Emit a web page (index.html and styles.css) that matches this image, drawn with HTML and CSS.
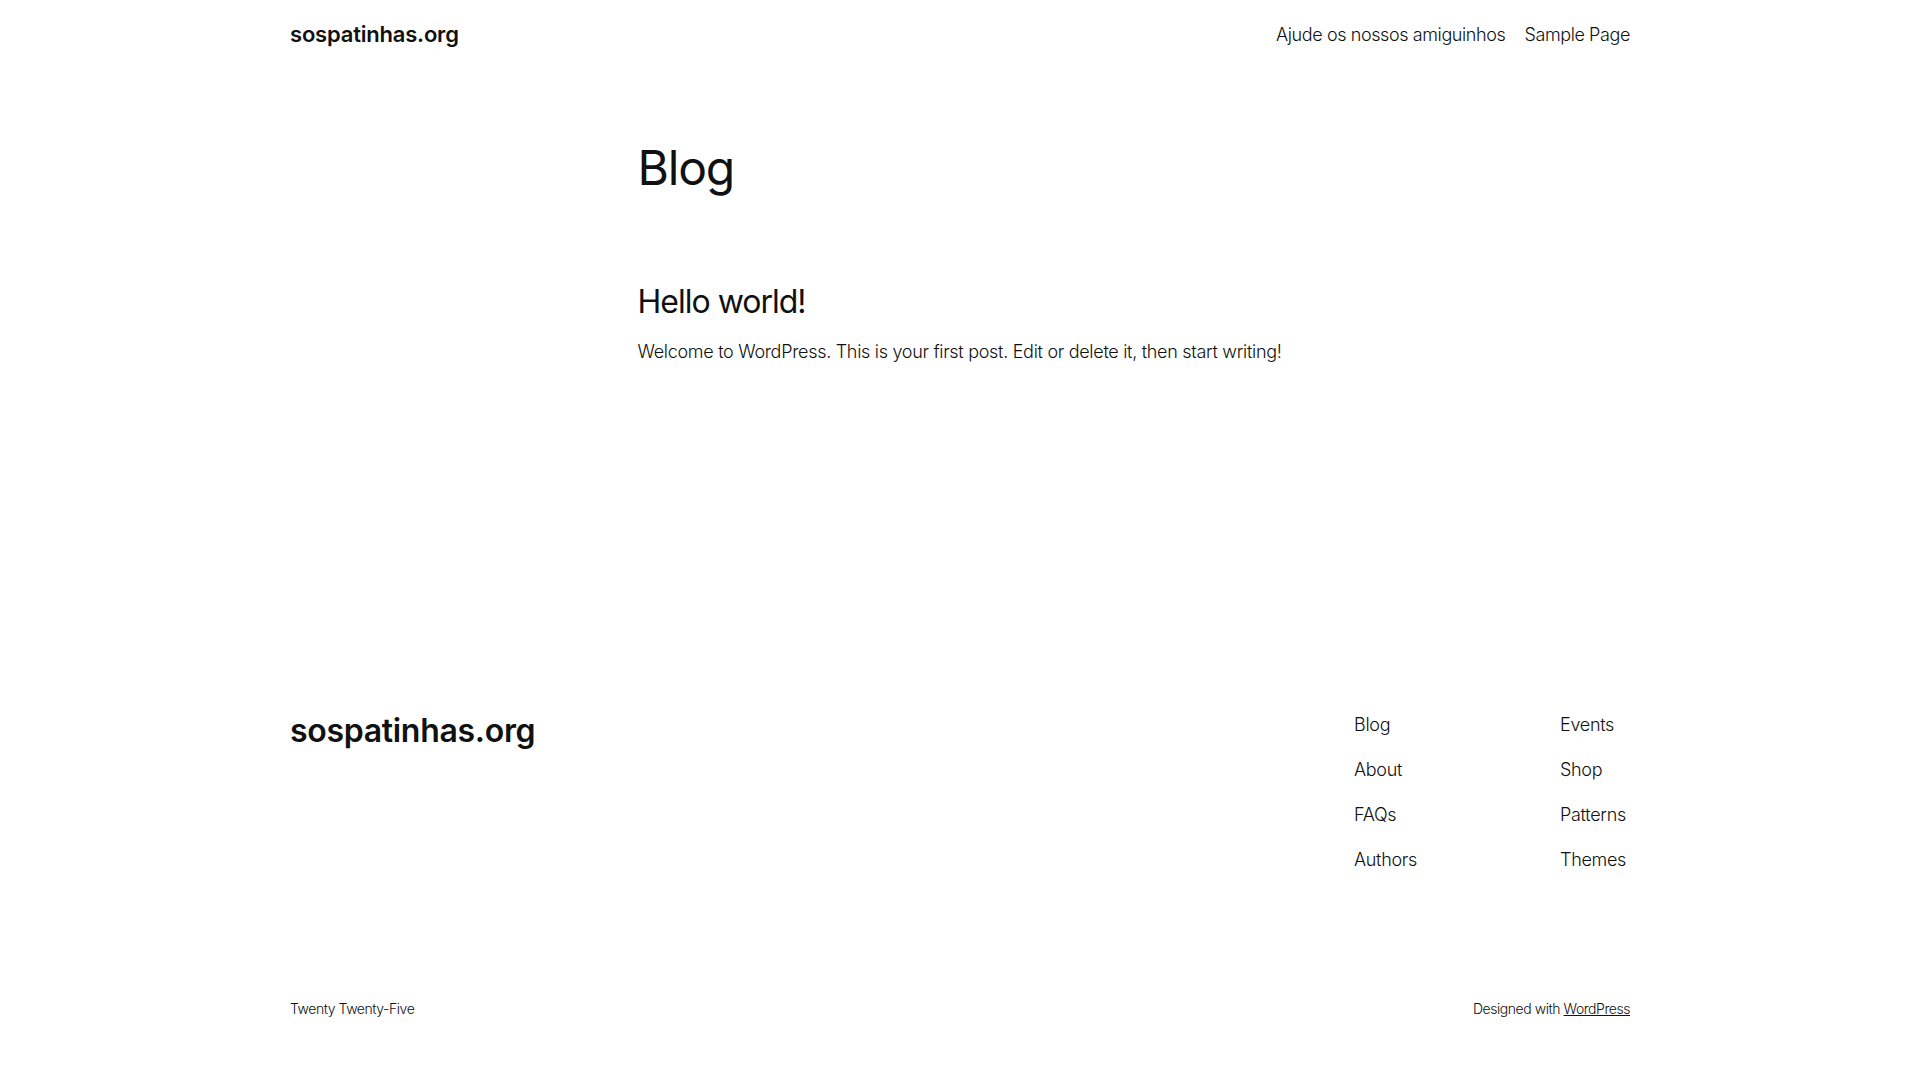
FILE: index.html
```html
<!DOCTYPE html>
<html lang="pt-BR">
<head>
    <meta charset="UTF-8">
    <meta name="viewport" content="width=device-width, initial-scale=1.0">
    <title>Blog – sospatinhas.org</title>
    <link rel="stylesheet" href="styles.css">
</head>
<body>
    <header class="site-header">
        <a class="site-title" href="#">sospatinhas.org</a>
        <nav class="header-nav">
            <a href="#">Ajude os nossos amiguinhos</a>
            <a href="#">Sample Page</a>
        </nav>
    </header>

    <main class="site-main">
        <h1 class="query-title">Blog</h1>
        <article class="post">
            <h2 class="post-title"><a href="#">Hello world!</a></h2>
            <p class="post-excerpt">Welcome to WordPress. This is your first post. Edit or delete it, then start writing!</p>
        </article>
    </main>

    <footer class="site-footer">
        <div class="footer-top">
            <a class="site-title footer-title" href="#">sospatinhas.org</a>
            <div class="footer-navs">
                <nav class="footer-nav">
                    <a href="#">Blog</a>
                    <a href="#">About</a>
                    <a href="#">FAQs</a>
                    <a href="#">Authors</a>
                </nav>
                <nav class="footer-nav">
                    <a href="#">Events</a>
                    <a href="#">Shop</a>
                    <a href="#">Patterns</a>
                    <a href="#">Themes</a>
                </nav>
            </div>
        </div>
        <div class="footer-bottom">
            <span>Twenty Twenty-Five</span>
            <span>Designed with <a href="#">WordPress</a></span>
        </div>
    </footer>
</body>
</html>
```

FILE: styles.css
```css
body {
    margin: 0;
    padding: 0 50px;
    background: #fff;
    color: #111111;
    font-family: Inter, "Noto Sans", sans-serif;
    font-weight: 300;
    font-size: 18px;
    line-height: 1.4;
    letter-spacing: -0.3px;
}
a {
    color: inherit;
    text-decoration: none;
}

/* header */
.site-header {
    max-width: 1340px;
    margin: 0 auto;
    padding: 20px 0;
    height: 28px;
    display: flex;
    align-items: center;
    justify-content: space-between;
}
.site-title {
    font-size: 22px;
    font-weight: 600;
    letter-spacing: -0.2px;
    line-height: 28px;
}
.header-nav {
    display: flex;
    gap: 19px;
    line-height: 25px;
    letter-spacing: -0.4px;
}

/* main */
.site-main {
    max-width: 645px;
    margin: 0 auto;
    padding-top: 73px;
}
.query-title {
    margin: 0;
    font-size: 48px;
    font-weight: 400;
    line-height: 54px;
    letter-spacing: -1.2px;
}
.post {
    margin-top: 89px;
}
.post-title {
    margin: 0;
    font-size: 32px;
    font-weight: 400;
    line-height: 36px;
    letter-spacing: -1px;
}
.post-excerpt {
    margin: 19px 0 0;
    line-height: 25px;
}

/* footer */
.site-footer {
    max-width: 1340px;
    margin: 345px auto 0;
    padding-bottom: 50px;
}
.footer-top {
    display: flex;
    justify-content: space-between;
    align-items: flex-start;
}
.footer-title {
    font-size: 32px;
    line-height: 44px;
    letter-spacing: -0.3px;
}
.footer-navs {
    display: flex;
    margin-top: 3px;
}
.footer-nav {
    display: flex;
    flex-direction: column;
    gap: 20px;
    line-height: 25px;
}
.footer-nav:first-child {
    width: 206px;
}
.footer-nav:last-child {
    width: 70px;
}
.footer-bottom {
    display: flex;
    justify-content: space-between;
    margin-top: 127px;
    font-size: 14px;
    line-height: 20px;
    letter-spacing: -0.45px;
}
.footer-bottom a {
    text-decoration: underline;
}
```
